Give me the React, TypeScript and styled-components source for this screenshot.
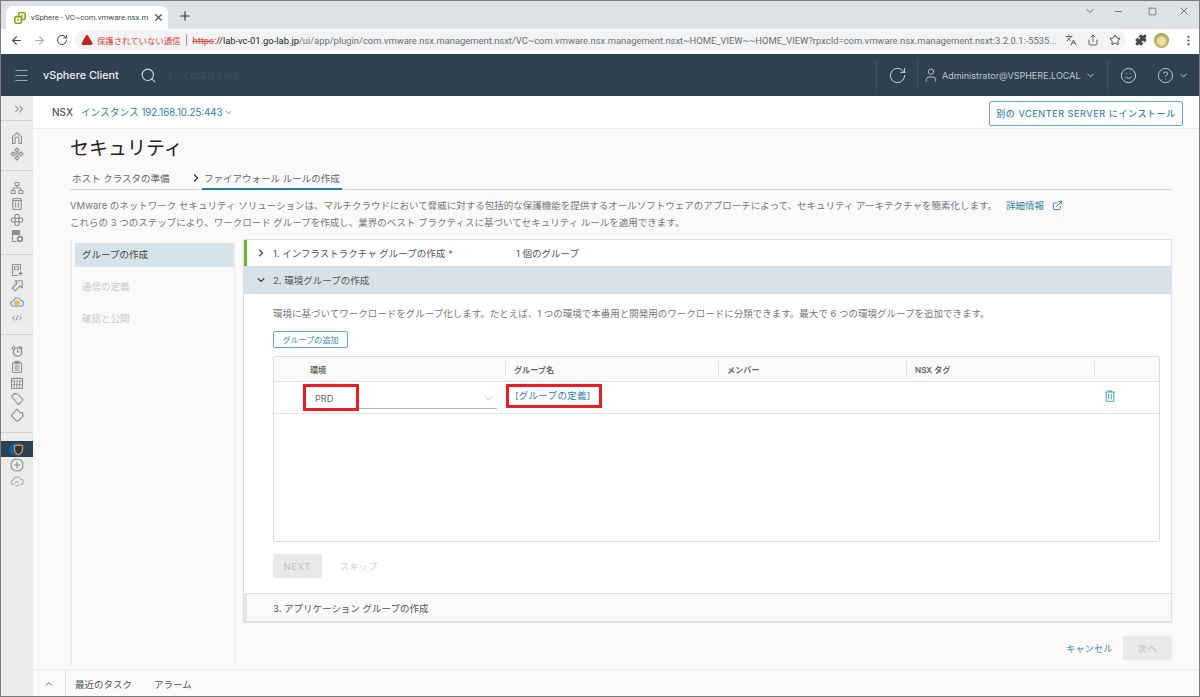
import React from 'react';
import styled, { createGlobalStyle } from 'styled-components';
import {
  ArrowLeft, ArrowRight, RotateCw, Plus, X, Minus, Square, ChevronDown, ChevronRight, ChevronUp, ChevronsRight,
  TriangleAlert, Share, Star, Puzzle, EllipsisVertical, Menu, Search, User, Smile, CircleHelp,
  ExternalLink, Languages,
} from 'lucide-react';

const FONT = `Inter, "Noto Sans CJK JP", sans-serif`;

const GlobalStyle = createGlobalStyle`
  html, body { margin: 0; padding: 0; background: #fff; }
  * { box-sizing: border-box; }
  body { font-family: ${FONT}; }
`;

const Window = styled.div`
  width: 1200px;
  height: 697px;
  border: 1px solid #7c7c7c;
  display: flex;
  flex-direction: column;
  overflow: hidden;
`;

/* browser chrome */
const TabStrip = styled.div`
  height: 28px;
  flex: none;
  background: #dee1e6;
  display: flex;
  align-items: flex-end;
  padding-left: 5px;
`;

const Tab = styled.div`
  width: 162px;
  height: 23px;
  background: #fff;
  border-radius: 7px 7px 0 0;
  display: flex;
  align-items: center;
  padding-left: 8px;
  gap: 5px;
  color: #45494e;
`;

const TabTitle = styled.span`
  font: 7.8px Roboto, "Noto Sans CJK JP", sans-serif;
  width: 117px;
  white-space: nowrap;
`;

const NewTab = styled.div`
  margin: 0 0 4px 10px;
  height: 18px;
  display: flex;
  align-items: center;
  color: #333;
`;

const WindowControls = styled.div`
  margin-left: auto;
  align-self: flex-start;
  display: flex;
  align-items: center;
  height: 20px;
  padding-right: 4px;
  color: #444;
`;

const ControlSlot = styled.span<{ $w: number }>`
  width: ${(p) => p.$w}px;
  display: flex;
  justify-content: center;
`;

const Toolbar = styled.div`
  height: 25px;
  flex: none;
  background: #fff;
  display: flex;
  align-items: center;
  padding: 0 9px 3px 3px;
  color: #5f6368;
`;

const NavButtons = styled.div`
  width: 71px;
  flex: none;
  display: flex;
  align-items: center;
  padding-left: 6px;
  gap: 10px;
`;

const Omnibox = styled.div`
  width: 1051px;
  flex: none;
  height: 20px;
  border-radius: 10px;
  background: #f1f3f4;
  display: flex;
  align-items: center;
  padding-left: 6px;
  font: 9.4px Roboto, "Noto Sans CJK JP", sans-serif;
  white-space: nowrap;
`;

const NotSecure = styled.span`
  color: #d6453a;
  margin-left: 4px;
  font-size: 8.4px;
`;

const OmniDivider = styled.i`
  width: 1px;
  height: 12px;
  background: #999;
  margin: 0 6px 0 5px;
`;

const Url = styled.span`
  width: 862px;
  flex: none;
  color: #6a6e73;
`;

const UrlScheme = styled.span`
  color: #d6453a;
  text-decoration: line-through;
`;

const UrlHost = styled.span`
  color: #222;
`;

const OmniIcons = styled.div`
  margin-left: 10px;
  display: flex;
  align-items: center;
  gap: 10px;
`;

const ExtensionIcons = styled.div`
  display: flex;
  align-items: center;
  margin-left: 9px;
  gap: 7px;
  color: #444;
`;

const Kebab = styled.span`
  display: flex;
  margin-left: 6px;
`;

const Avatar = styled.div`
  width: 15px;
  height: 15px;
  border-radius: 50%;
  background: radial-gradient(circle at 50% 55%, #e9dfa8 0 30%, #b3a24e 60%, #77803c 100%);
`;

/* vsphere header */
const AppHeader = styled.header`
  height: 42px;
  flex: none;
  background: #2f4050;
  display: flex;
  align-items: center;
  color: #d5dbe0;
`;

const HeaderBrand = styled.div`
  display: flex;
  align-items: center;
  width: 875px;
  flex: none;
  padding-left: 12px;
`;

const BrandName = styled.span`
  font: 500 10.8px ${FONT};
  color: #eef1f3;
  margin: 0 21px 0 13px;
`;

const SearchHint = styled.span`
  margin-left: 9px;
  font: 8.4px ${FONT};
  color: #3f505e;
`;

const HeaderCell = styled.div<{ $w: number; $line?: boolean }>`
  width: ${(p) => p.$w}px;
  flex: none;
  height: 30px;
  display: flex;
  align-items: center;
  justify-content: center;
  border-left: ${(p) => (p.$line ? '1px solid #43535f' : 'none')};
  gap: 4px;
`;

const UserCell = styled(HeaderCell)`
  justify-content: flex-start;
  padding-left: 5px;
`;

const UserName = styled.span`
  font: 9px ${FONT};
  margin-left: -1px;
  color: #bcc5cc;
  white-space: nowrap;
`;

/* page */
const Body = styled.div`
  flex: 1;
  min-height: 0;
  display: flex;
`;

const Rail = styled.nav`
  width: 32px;
  flex: none;
  background: #ececec;
  display: flex;
  flex-direction: column;
  color: #8f8f8f;
`;

const RailGroup = styled.div<{ $top: number; $h: number }>`
  height: ${(p) => p.$h}px;
  padding-top: ${(p) => p.$top}px;
  border-bottom: 1px solid #d2d2d2;
  &:last-child { border-bottom: 0; }
`;

const RailItem = styled.div<{ $active?: boolean }>`
  height: 16px;
  display: flex;
  align-items: center;
  justify-content: center;
  background: ${(p) => (p.$active ? '#2a4155' : 'transparent')};
`;

const RailToggle = styled(RailItem)`
  padding-left: 4px;
`;

const Main = styled.main`
  flex: 1;
  min-width: 0;
  display: flex;
  flex-direction: column;
  background: #fafafa;
`;

const NsxBar = styled.div`
  height: 33px;
  flex: none;
  background: #fff;
  border-bottom: 1px solid #eee;
  display: flex;
  align-items: center;
  padding: 0 16px 0 19px;
`;

const NsxLabel = styled.span`
  font: 500 10px ${FONT};
  color: #555;
  margin-right: 8px;
`;

const Instance = styled.span`
  display: flex;
  align-items: center;
  gap: 1px;
  font: 9.7px ${FONT};
  color: #2e7fa8;
`;

const OutlineButton = styled.button`
  margin-left: auto;
  width: 194px;
  height: 25px;
  margin-top: 3px;
  background: #fff;
  border: 1px solid #62a9cd;
  border-radius: 2px;
  font: 500 9px ${FONT};
  letter-spacing: 0.6px;
  color: #3a88b0;
  padding: 0;
`;

const Content = styled.div`
  flex: 1;
  min-height: 0;
  padding: 7px 27px 0 37px;
  display: flex;
  flex-direction: column;
`;

const Title = styled.h1`
  margin: 0;
  font: 400 19px/26px ${FONT};
  color: #222;
`;

const Steps = styled.div`
  margin-top: 8px;
  height: 20px;
  display: flex;
  border-bottom: 1px solid #d8d8d8;
  padding-left: 2px;
  font: 9.5px/17px ${FONT};
  color: #666;
`;

const StepLink = styled.span`
  width: 118px;
  flex: none;
`;

const StepArrow = styled.span`
  width: 12px;
  flex: none;
  color: #333;
  display: flex;
  padding-top: 2px;
`;

const StepActive = styled.span`
  padding: 0 2px;
  height: 20px;
  border-bottom: 2px solid #1b7fb3;
`;

const Description = styled.p`
  margin: 7px 0 8px;
  font: 9.5px/17px ${FONT};
  color: #777;
  white-space: nowrap;
`;

const DocLink = styled.span`
  color: #2e7fa8;
  margin-left: 9px;
  display: inline-flex;
  align-items: center;
  gap: 8px;
  vertical-align: top;
  line-height: 17px;
  height: 17px;
`;

const Wizard = styled.div`
  flex: 1;
  min-height: 0;
  display: flex;
`;

const WizardNav = styled.div`
  width: 165px;
  flex: none;
  border-left: 2px solid #ececec;
  border-right: 1px solid #ececec;
  padding: 4px 0 0 3px;
  margin-bottom: 4px;
`;

const WizardNavItem = styled.div<{ $current?: boolean }>`
  height: ${(p) => (p.$current ? 24 : 32)}px;
  margin-bottom: ${(p) => (p.$current ? 3 : 0)}px;
  padding: ${(p) => (p.$current ? '0 0 2px 7px' : '0 0 0 7px')};
  display: flex;
  align-items: center;
  font: 9.5px ${FONT};
  background: ${(p) => (p.$current ? '#d8e3e9' : 'transparent')};
  color: ${(p) => (p.$current ? '#444' : '#c8c8c8')};
`;

const WizardRight = styled.div`
  flex: 1;
  min-width: 0;
  padding-left: 8px;
  display: flex;
  flex-direction: column;
`;

const Card = styled.section`
  height: 383px;
  flex: none;
  background: #fff;
  border: 1px solid #e0e0e0;
  box-shadow: 0 1px 1px #e4e4e4;
  display: flex;
  flex-direction: column;
`;

const AccordionHead = styled.div<{ $open?: boolean; $bar?: string; $muted?: boolean }>`
  height: ${(p) => (p.$muted || p.$open ? 28 : 26)}px;
  flex: none;
  display: flex;
  align-items: center;
  border-left: 3px solid ${(p) => p.$bar ?? 'transparent'};
  padding-left: 8px;
  font: 9.5px ${FONT};
  color: #555;
  background: ${(p) => (p.$open ? '#d8e3e9' : p.$muted ? '#fafafa' : '#fff')};
  border-top: ${(p) => (p.$muted ? '1px solid #e0e0e0' : 'none')};
`;

const HeadChevron = styled.span`
  width: 18px;
  flex: none;
  display: flex;
  color: #444;
`;

const HeadLabel = styled.span<{ $w?: number }>`
  width: ${(p) => p.$w ?? 243}px;
  flex: none;
  white-space: nowrap;
`;

const Required = styled.span`
  color: #d9534f;
  margin-left: 3px;
`;

const AccordionBody = styled.div`
  flex: 1;
  min-height: 0;
  padding: 11px 11px 0 29px;
`;

const BodyText = styled.p`
  margin: 0;
  font: 9.5px/17px ${FONT};
  color: #777;
  white-space: nowrap;
`;

const AddButton = styled.button`
  margin-top: 9px;
  display: block;
  width: 75px;
  height: 17px;
  padding: 0;
  background: #fff;
  border: 1px solid #62a9cd;
  border-radius: 2px;
  font: 8.1px ${FONT};
  color: #3a88b0;
`;

const Grid = styled.div`
  margin-top: 8px;
  height: 186px;
  border: 1px solid #dcdcdc;
  border-radius: 2px;
`;

const GridRow = styled.div<{ $head?: boolean }>`
  display: grid;
  grid-template-columns: 232px 213px 188px 188px 1fr;
  height: ${(p) => (p.$head ? 25 : 32)}px;
  background: ${(p) => (p.$head ? '#fafafa' : '#fff')};
  border-bottom: 1px solid #e2e2e2;
`;

const HeadCell = styled.div<{ $first?: boolean }>`
  font: 600 8.1px ${FONT};
  color: #666;
  display: flex;
  align-items: center;
  padding-left: ${(p) => (p.$first ? 36 : 8)}px;
  position: relative;
  &::after {
    content: '';
    position: absolute;
    right: 0;
    top: 4px;
    bottom: 5px;
    width: 1px;
    background: #e2e2e2;
  }
  &:last-child::after { display: none; }
`;

const RowCell = styled.div`
  position: relative;
  display: flex;
  align-items: center;
`;

const SelectBox = styled.div`
  margin: 2px 0 0 36px;
  width: 187px;
  height: 21px;
  border-bottom: 1px solid #b9b9b9;
  display: flex;
  align-items: center;
  justify-content: space-between;
  padding: 0 2px 0 5px;
  font: 9.2px ${FONT};
  color: #666;
`;

const GroupLink = styled.span`
  font: 9.5px ${FONT};
  letter-spacing: 0.3px;
  color: #2e7fa8;
  margin: -6px 0 0 9px;
`;

const RedMark = styled.div<{ $left: number; $w: number; $h: number }>`
  position: absolute;
  top: 2px;
  left: ${(p) => p.$left}px;
  width: ${(p) => p.$w}px;
  height: ${(p) => p.$h}px;
  border: 3px solid #ed1c24;
`;

const TrashCell = styled(RowCell)`
  padding-left: 9px;
  color: #4f9fc4;
  padding-bottom: 4px;
`;

const BodyActions = styled.div`
  margin-top: 12px;
  display: flex;
  align-items: center;
  gap: 18px;
`;

const DisabledButton = styled.div<{ $w: number }>`
  width: ${(p) => p.$w}px;
  height: 24px;
  background: #e9e9e9;
  border-radius: 2px;
  display: flex;
  align-items: center;
  justify-content: center;
  font: 500 9px ${FONT};
  letter-spacing: 0.8px;
  color: #c4c4c4;
`;

const SkipLabel = styled.span`
  font: 9.3px ${FONT};
  color: #cfcfcf;
`;

const WizardFooter = styled.div`
  margin-top: 14px;
  display: flex;
  justify-content: flex-end;
  align-items: center;
  gap: 10px;
`;

const CancelLink = styled.span`
  font: 9.1px ${FONT};
  letter-spacing: 0.3px;
  color: #3a88b0;
`;

const TaskBar = styled.div`
  height: 27px;
  flex: none;
  background: #fafafa;
  border-top: 2px solid #efefef;
  display: flex;
  align-items: center;
  font: 9.5px ${FONT};
  color: #555;
`;

const TaskToggle = styled.div`
  width: 33px;
  height: 100%;
  border-right: 1px solid #dedede;
  display: flex;
  align-items: center;
  justify-content: center;
  color: #777;
  margin-right: 9px;
`;

const TaskTab = styled.span<{ $w: number }>`
  width: ${(p) => p.$w}px;
`;

const Favicon = () => (
  <svg width="12" height="12" viewBox="0 0 12 12">
    <rect x="4.6" y="0.8" width="6.6" height="6.6" rx="1.4" fill="#fff" stroke="#6cb31f" strokeWidth="1.6" />
    <rect x="0.8" y="4.6" width="6.6" height="6.6" rx="1.4" fill="#fff" stroke="#6cb31f" strokeWidth="1.6" />
    <rect x="3" y="6.8" width="2.2" height="2.2" fill="#f0a81c" />
    <rect x="6.8" y="3" width="2.2" height="2.2" fill="#f0a81c" />
  </svg>
);

const Glyph = ({ children, color }: { children: React.ReactNode; color?: string }) => (
  <svg width="14" height="14" viewBox="0 0 14 14" fill="none" stroke={color ?? 'currentColor'} strokeWidth="1.1" strokeLinejoin="round">
    {children}
  </svg>
);

const railGroups: { top: number; h: number; items: React.ReactNode[] }[] = [
  {
    top: 9,
    h: 50,
    items: [
      <Glyph><path d="M2.5 12.5V5.8L7 1.8l4.5 4v6.7H9V8a2 2 0 0 0-4 0v4.5z" /></Glyph>,
      <Glyph>
        <path d="M7 1l2 2-2 2-2-2zM7 9l2 2-2 2-2-2zM3 5l2 2-2 2-2-2zM11 5l2 2-2 2-2-2z" />
        <path d="M5.5 5.5l3 3M8.5 5.5l-3 3" />
      </Glyph>,
    ],
  },
  {
    top: 9,
    h: 84,
    items: [
      <Glyph>
        <rect x="5" y="1.5" width="4" height="3" />
        <rect x="1.2" y="9.5" width="4" height="3" />
        <rect x="8.8" y="9.5" width="4" height="3" />
        <path d="M7 4.5V7M3.2 9.5V7h7.6v2.5" />
      </Glyph>,
      <Glyph>
        <rect x="2.8" y="1.5" width="8.4" height="11" rx="1" />
        <path d="M2.8 3.6h8.4M5.6 5.5v5M8.4 5.5v5" />
      </Glyph>,
      <Glyph>
        <circle cx="7" cy="3.4" r="2.1" />
        <circle cx="7" cy="10.6" r="2.1" />
        <circle cx="3.4" cy="7" r="2.1" />
        <circle cx="10.6" cy="7" r="2.1" />
      </Glyph>,
      <Glyph>
        <path d="M6.5 12.5H2.5v-11h7v5" />
        <rect x="2.5" y="1.5" width="7" height="4" fill="#8f8f8f" />
        <circle cx="10" cy="10" r="2.4" strokeWidth="1.6" />
      </Glyph>,
    ],
  },
  {
    top: 7,
    h: 80,
    items: [
      <Glyph>
        <path d="M8 12.5H2.5v-11h8V7" />
        <rect x="4.5" y="3.8" width="4" height="3" />
        <path d="M10.5 8.5v4M8.5 10.5h4" strokeWidth="1.4" />
      </Glyph>,
      <Glyph><path d="M5 1.8h7.2V9L10 6.8 5 11.8 2.2 9l5-5z" /></Glyph>,
      <Glyph color="#5aa5d8">
        <path d="M3.6 11.2a2.6 2.6 0 0 1-.2-5.2 3.7 3.7 0 0 1 7.1-.6 2.9 2.9 0 0 1 .1 5.8z" />
        <circle cx="7" cy="8" r="2.3" fill="#eeb84f" stroke="#eeb84f" />
      </Glyph>,
      <Glyph>
        <path d="M4.6 5 2.4 7l2.2 2M9.4 5l2.2 2-2.2 2M8 4.5 6 9.5" strokeWidth="1" />
      </Glyph>,
    ],
  },
  {
    top: 8,
    h: 98,
    items: [
      <Glyph>
        <path d="M2.5 5.5a1.9 1.9 0 0 1 2.6-2.6M11.5 5.5a1.9 1.9 0 0 0-2.6-2.6" strokeWidth="1.3" />
        <circle cx="7.5" cy="8" r="4.2" strokeWidth="1.3" />
        <path d="M7.5 5.8V8h2" />
      </Glyph>,
      <Glyph>
        <rect x="2.5" y="2.5" width="9" height="10" rx="1" />
        <rect x="5" y="1.2" width="4" height="2.6" fill="#8f8f8f" />
        <path d="M4.5 6h5M4.5 8h5M4.5 10h5" />
      </Glyph>,
      <Glyph>
        <rect x="1.5" y="2.5" width="11" height="10" />
        <path d="M1.5 5h11M4 1v2.4M7 1v2.4M10 1v2.4M4.3 5v7.5M7 5v7.5M9.7 5v7.5M1.5 8.7h11" strokeWidth="0.8" />
      </Glyph>,
      <Glyph><path d="M1.6 4.2l2.6-2.6L8 2l4.4 5.2a1 1 0 0 1 0 1.4l-3.4 3.4a1 1 0 0 1-1.4 0z" /></Glyph>,
      <Glyph>
        <path d="M5.2 3.2 7 1.2l1.8 2 1.6 1.6 2.4-.2-.4 2.4 1 1-2.6 2.4-1.6 1.6-1.8 1.4-1.8-1.4-1.6-1.6L1.4 7.6 3.2 5.4z" />
      </Glyph>,
    ],
  },
];

const TrashGlyph = () => (
  <svg width="12" height="12" viewBox="0 0 12 12" fill="none" stroke="currentColor" strokeWidth="1">
    <path d="M1 2h10M2.2 2v9.3h7.6V2M4.7 4v5.5M7.3 4v5.5M4.5 2V.8h3V2" />
  </svg>
);

const ActiveGlyph = () => (
  <svg width="17" height="15" viewBox="0 0 17 15">
    <circle cx="6.5" cy="7.5" r="6.5" fill="#0b5f9e" />
    <path d="M9.5 3 13.5 3.6v4.2c0 2.5-1.9 4-4 5-2.1-1-4-2.5-4-5V3.6z" fill="#24384a" stroke="#e3853a" strokeWidth="1.4" />
  </svg>
);

export default function App() {
  return (
    <Window>
      <GlobalStyle />
      <TabStrip>
        <Tab>
          <Favicon />
          <TabTitle>vSphere - VC~com.vmware.nsx.m</TabTitle>
          <X size={11} strokeWidth={2.4} />
        </Tab>
        <NewTab>
          <Plus size={14} strokeWidth={2} />
        </NewTab>
        <WindowControls>
          <ControlSlot $w={29}>
            <ChevronDown size={12} strokeWidth={1.4} />
          </ControlSlot>
          <ControlSlot $w={29}>
            <Minus size={11} strokeWidth={1.4} />
          </ControlSlot>
          <ControlSlot $w={39}>
            <Square size={9} strokeWidth={1.6} />
          </ControlSlot>
          <ControlSlot $w={23}>
            <X size={12} strokeWidth={1.4} />
          </ControlSlot>
        </WindowControls>
      </TabStrip>
      <Toolbar>
        <NavButtons>
          <ArrowLeft size={13} strokeWidth={2} color="#444" />
          <ArrowRight size={13} strokeWidth={2} color="#aaa" />
          <RotateCw size={12} strokeWidth={2} color="#444" />
        </NavButtons>
        <Omnibox>
          <TriangleAlert size={12} fill="#c5221f" color="#c5221f" />
          <NotSecure>保護されていない通信</NotSecure>
          <OmniDivider />
          <Url>
            <UrlScheme>https</UrlScheme>
            <UrlHost>://lab-vc-01.go-lab.jp</UrlHost>
            /ui/app/plugin/com.vmware.nsx.management.nsxt/VC~com.vmware.nsx.management.nsxt~HOME_VIEW~~HOME_VIEW?rpxcId=com.vmware.nsx.management.nsxt:3.2.0.1:-5535...
          </Url>
          <OmniIcons>
            <Languages size={12} />
            <Share size={12} />
            <Star size={12} color="#444" />
          </OmniIcons>
        </Omnibox>
        <ExtensionIcons>
          <Puzzle size={12} fill="#444" />
          <Avatar />
          <Kebab>
            <EllipsisVertical size={13} />
          </Kebab>
        </ExtensionIcons>
      </Toolbar>
      <AppHeader>
        <HeaderBrand>
          <Menu size={17} strokeWidth={1.5} color="#9aa6af" />
          <BrandName>vSphere Client</BrandName>
          <Search size={17} strokeWidth={1.5} />
          <SearchHint>すべての環境を検索</SearchHint>
        </HeaderBrand>
        <HeaderCell $w={41} $line>
          <RotateCw size={19} strokeWidth={1.2} />
        </HeaderCell>
        <UserCell $w={190} $line>
          <User size={16} strokeWidth={1.2} />
          <UserName>Administrator@VSPHERE.LOCAL</UserName>
          <ChevronDown size={11} />
        </UserCell>
        <HeaderCell $w={42} $line>
          <Smile size={17} strokeWidth={1.3} />
        </HeaderCell>
        <HeaderCell $w={48}>
          <CircleHelp size={17} strokeWidth={1.2} />
          <ChevronDown size={11} />
        </HeaderCell>
      </AppHeader>
      <Body>
        <Rail>
          <RailGroup $top={5} $h={25}>
            <RailToggle>
              <ChevronsRight size={14} strokeWidth={1.5} color="#555" />
            </RailToggle>
          </RailGroup>
          {railGroups.map((group, i) => (
            <RailGroup key={i} $top={group.top} $h={group.h}>
              {group.items.map((icon, j) => (
                <RailItem key={j}>{icon}</RailItem>
              ))}
            </RailGroup>
          ))}
          <RailGroup $top={8} $h={60}>
            <RailItem $active>
              <ActiveGlyph />
            </RailItem>
            <RailItem>
              <Glyph>
                <path d="M4.5 1.2h5l3.3 3.3v5l-3.3 3.3h-5L1.2 9.5v-5z" />
                <path d="M7 3.8v6.4M3.8 7h6.4" />
              </Glyph>
            </RailItem>
            <RailItem>
              <Glyph color="#adadad">
                <path d="M4 10.8a2.5 2.5 0 0 1-.4-5A3.5 3.5 0 0 1 10.3 5a2.800 2.800 0 0 1 .2 5.600" />
                <path d="M5 9.500a2.200 2.200 0 0 1 3.800-1M9 10.500a2.200 2.200 0 0 1-3.300.9" />
              </Glyph>
            </RailItem>
          </RailGroup>
        </Rail>
        <Main>
          <NsxBar>
            <NsxLabel>NSX</NsxLabel>
            <Instance>
              インスタンス 192.168.10.25:443
              <ChevronDown size={9} />
            </Instance>
            <OutlineButton>別の VCENTER SERVER にインストール</OutlineButton>
          </NsxBar>
          <Content>
            <Title>セキュリティ</Title>
            <Steps>
              <StepLink>ホスト クラスタの準備</StepLink>
              <StepArrow>
                <ChevronRight size={12} strokeWidth={2.4} />
              </StepArrow>
              <StepActive>ファイアウォール ルールの作成</StepActive>
            </Steps>
            <Description>
              VMware のネットワーク セキュリティ ソリューションは、マルチクラウドにおいて脅威に対する包括的な保護機能を提供するオールソフトウェアのアプローチによって、セキュリティ アーキテクチャを簡素化します。
              <DocLink>
                詳細情報
                <ExternalLink size={11} />
              </DocLink>
              <br />
              これらの 3 つのステップにより、ワークロード グループを作成し、業界のベスト プラクティスに基づいてセキュリティ ルールを適用できます。
            </Description>
            <Wizard>
              <WizardNav>
                <WizardNavItem $current>グループの作成</WizardNavItem>
                <WizardNavItem>通信の定義</WizardNavItem>
                <WizardNavItem>確認と公開</WizardNavItem>
              </WizardNav>
              <WizardRight>
                <Card>
                  <AccordionHead $bar="#6fb52c">
                    <HeadChevron>
                      <ChevronRight size={12} strokeWidth={2.2} />
                    </HeadChevron>
                    <HeadLabel>
                      1. インフラストラクチャ グループの作成<Required>*</Required>
                    </HeadLabel>
                    <span>1 個のグループ</span>
                  </AccordionHead>
                  <AccordionHead $open>
                    <HeadChevron>
                      <ChevronDown size={12} strokeWidth={2.2} />
                    </HeadChevron>
                    <HeadLabel>2. 環境グループの作成</HeadLabel>
                  </AccordionHead>
                  <AccordionBody>
                    <BodyText>
                      環境に基づいてワークロードをグループ化します。たとえば、1 つの環境で本番用と開発用のワークロードに分類できます。最大で 6 つの環境グループを追加できます。
                    </BodyText>
                    <AddButton>グループの追加</AddButton>
                    <Grid>
                      <GridRow $head>
                        <HeadCell $first>環境</HeadCell>
                        <HeadCell>グループ名</HeadCell>
                        <HeadCell>メンバー</HeadCell>
                        <HeadCell>NSX タグ</HeadCell>
                        <HeadCell />
                      </GridRow>
                      <GridRow>
                        <RowCell>
                          <SelectBox>
                            PRD
                            <ChevronDown size={13} strokeWidth={1} color="#999" />
                          </SelectBox>
                          <RedMark $left={29} $w={56} $h={27} />
                        </RowCell>
                        <RowCell>
                          <GroupLink>[グループの定義]</GroupLink>
                          <RedMark $left={0} $w={96} $h={24} />
                        </RowCell>
                        <RowCell />
                        <RowCell />
                        <TrashCell>
                          <TrashGlyph />
                        </TrashCell>
                      </GridRow>
                    </Grid>
                    <BodyActions>
                      <DisabledButton $w={49}>NEXT</DisabledButton>
                      <SkipLabel>スキップ</SkipLabel>
                    </BodyActions>
                  </AccordionBody>
                  <AccordionHead $muted $bar="#e6e6e6">
                    <HeadChevron />
                    <HeadLabel>3. アプリケーション グループの作成</HeadLabel>
                  </AccordionHead>
                </Card>
                <WizardFooter>
                  <CancelLink>キャンセル</CancelLink>
                  <DisabledButton $w={49}>次へ</DisabledButton>
                </WizardFooter>
              </WizardRight>
            </Wizard>
          </Content>
          <TaskBar>
            <TaskToggle>
              <ChevronUp size={12} strokeWidth={2} />
            </TaskToggle>
            <TaskTab $w={79}>最近のタスク</TaskTab>
            <TaskTab $w={50}>アラーム</TaskTab>
          </TaskBar>
        </Main>
      </Body>
    </Window>
  );
}
